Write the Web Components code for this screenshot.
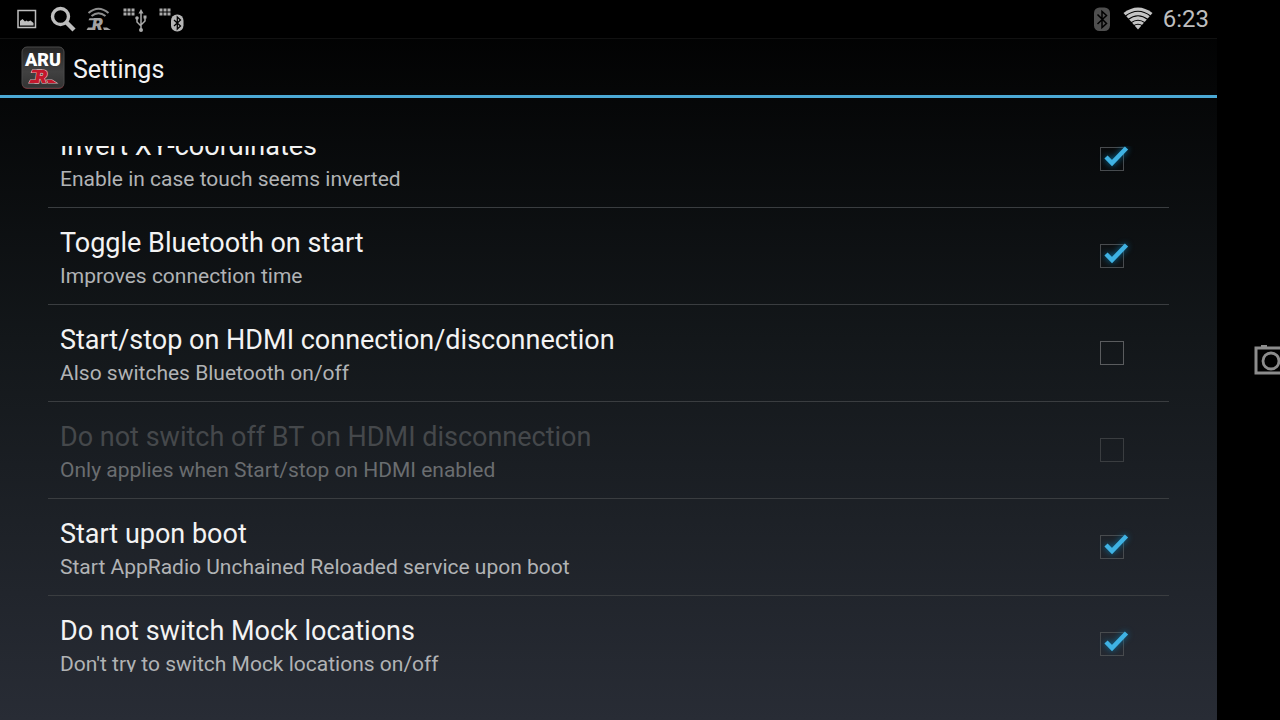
<!DOCTYPE html>
<html lang="en">
<head>
<meta charset="utf-8">
<meta name="viewport" content="width=device-width, initial-scale=1">
<title>Settings</title>
<style>
  html, body { margin: 0; height: 100%; background: #000; }
  body { font-family: Roboto, "Noto Sans", sans-serif; color: #f3f3f3; }
</style>
</head>
<body>
<settings-screen>
  <status-bar slot="status" time="6:23"></status-bar>
  <action-bar slot="header">Settings</action-bar>
  <settings-list offset="35">
    <setting-row label="Invert XY-coordinates" checked>Enable in case touch seems inverted</setting-row>
    <setting-row label="Toggle Bluetooth on start" checked>Improves connection time</setting-row>
    <setting-row label="Start/stop on HDMI connection/disconnection">Also switches Bluetooth on/off</setting-row>
    <setting-row label="Do not switch off BT on HDMI disconnection" disabled>Only applies when Start/stop on HDMI enabled</setting-row>
    <setting-row label="Start upon boot" checked>Start AppRadio Unchained Reloaded service upon boot</setting-row>
    <setting-row label="Do not switch Mock locations" checked>Don't try to switch Mock locations on/off</setting-row>
  </settings-list>
  <side-bar slot="side"></side-bar>
</settings-screen>

<script>
class BaseElement extends HTMLElement {
  constructor() {
    super();
    this.attachShadow({ mode: "open" });
  }
  connectedCallback() {
    this.shadowRoot.innerHTML = this.render();
    this.ready();
  }
  ready() {}
}

customElements.define("settings-screen", class extends BaseElement {
  render() {
    return `
      <style>
        :host { display: flex; height: 100vh; background: #000; }
        .app { flex: 1; min-width: 0; display: flex; flex-direction: column;
               background: linear-gradient(#000, #13171a 47%, #282c35); }
        main { flex: 1; min-height: 0; display: flex; padding: 48px; }
      </style>
      <div class="app">
        <slot name="status"></slot>
        <slot name="header"></slot>
        <main><slot></slot></main>
      </div>
      <slot name="side"></slot>`;
  }
});

customElements.define("status-bar", class extends BaseElement {
  render() {
    return `
      <style>
        :host { display: flex; justify-content: space-between; align-items: center; height: 38px;
                padding: 0 8px 0 16px; background: #000; border-bottom: 1px solid #111;
                color: #bebebe; font-size: 24px; line-height: 40px; }
        .group { display: flex; align-items: center; gap: 12px; }
        .system { gap: 10px; }
        svg { display: block; }
      </style>
      <div class="group">
        <svg width="22" height="38" viewBox="16 0 22 38" role="img" aria-label="Screenshot saved">
          <path d="M18 10.500h17.500v17H18z" fill="none" stroke="#bebebe" stroke-width="1.500"/>
          <path d="M20 25.500v-4.500l2.500-2 2.500 2.500 1.500-1 1.500 1 2.500-1 3 2.500v2.500z" fill="#bebebe"/>
        </svg>
        <svg width="24" height="38" viewBox="50 0 24 38" overflow="visible" role="img" aria-label="Search">
          <circle cx="60.500" cy="16.500" r="8" fill="none" stroke="#bebebe" stroke-width="3.400"/>
          <path d="M66 22l8 8" stroke="#bebebe" stroke-width="4.500"/>
        </svg>
        <svg width="25" height="38" viewBox="86 0 25 38" role="img" aria-label="AppRadio">
          <g fill="none" stroke="#8e8e8e" stroke-width="2">
            <path d="M88.500 13q10-8.500 20 0M91.500 16q7-5.500 14 0"/>
          </g>
          <path d="M89.500 18.300h8v2h-9zM86.500 30l1.500-2.500h7V30zM103 27.500h4l4 2.500h-7z" fill="#a2a2a2"/>
          <text x="92" y="30" font-family="Inter, sans-serif" font-size="16" font-weight="900" font-style="italic" fill="#a2a2a2">R</text>
        </svg>
        <svg width="25" height="38" viewBox="123 0 25 38" role="img" aria-label="USB connected">
          <path d="M123.500 8.500h3v3h-3zm4 0h3v3h-3zm4 0h3v3h-3zm-8 4h3v3h-3zm4 0h3v3h-3zm4 0h3v3h-3z" fill="#aaa"/>
          <g fill="none" stroke="#aaa" stroke-width="1.500">
            <path d="M141 12v18M137 18v4l4 4M145 17v4l-4 4"/>
          </g>
          <path d="M141 9l2.500 4.500h-5zM143.500 15.500h3v3h-3z" fill="#aaa"/>
          <circle cx="137" cy="18" r="1.800" fill="#aaa"/><circle cx="141" cy="30" r="2" fill="#aaa"/>
        </svg>
        <svg width="26" height="38" viewBox="160 0 26 38" overflow="visible" role="img" aria-label="Bluetooth connected">
          <path d="M159.500 8.500h3v3h-3zm4 0h3v3h-3zm4 0h3v3h-3zm-8 4h3v3h-3zm4 0h3v3h-3zm4 0h3v3h-3z" fill="#aaa"/>
          <rect x="171" y="14.500" width="12.500" height="17" rx="6" fill="#b5b5b5"/>
          <path d="M174 20l6.500 6-3.200 3V17l3.200 3-6.500 6" fill="none" stroke="#000" stroke-width="1.300"/>
        </svg>
      </div>
      <div class="group system">
        <svg width="20" height="38" viewBox="1093 0 20 38" role="img" aria-label="Bluetooth">
          <rect x="1094" y="7.500" width="16" height="23.500" rx="5.500" fill="#4f4f4f"/>
          <path d="M1097.500 14.500l9 9-4.500 4V11.500l4.500 4-9 8.500" fill="none" stroke="#000" stroke-width="1.500"/>
        </svg>
        <svg width="30" height="38" viewBox="1123 0 30 38" role="img" aria-label="Wi-Fi">
          <path d="M1123.500 13q14.500-11 29 0L1138 29.500z" fill="#c4c4c4"/>
          <g fill="none" stroke="#000" stroke-width="1.100">
            <path d="M1125.500 16q12.500-9.500 25 0M1128 19.500q10-7.500 20 0M1131 22.800q7-5 14 0M1133.500 25.800q4.500-3 9 0"/>
          </g>
        </svg>
        <time>${this.getAttribute("time")}</time>
      </div>`;
  }
});

customElements.define("action-bar", class extends BaseElement {
  render() {
    return `
      <style>
        :host { display: flex; align-items: center; gap: 8px; height: 54px; padding: 2px 21px 0;
                border-bottom: 3px solid #4ba9d6; }
        svg { display: block; }
        h1 { margin: 0; padding-top: 4px; font-size: 25px; line-height: 32px; font-weight: 400; }
      </style>
      <svg width="44" height="44" viewBox="0 0 44 44" role="img" aria-label="AppRadio Unchained Reloaded">
        <defs><linearGradient id="g" x2="0" y2="1">
          <stop stop-color="#252525"/><stop offset=".6" stop-color="#414141"/><stop offset="1" stop-color="#333"/>
        </linearGradient></defs>
        <rect x="1" y="2" width="42" height="41" rx="5" fill="#8a2028"/>
        <rect x="1" y="1" width="42" height="41" rx="5" fill="url(#g)" stroke="#4a4a4a"/>
        <text x="22" y="20" text-anchor="middle" font-family="Roboto, sans-serif" font-size="18" font-weight="900" fill="#fff">ARU</text>
        <path d="M11.500 24h9v2.500h-10zM8 37l1.500-3h8v3zM26 34h5l4.500 3H27z" fill="none" stroke="#e8b9bd" stroke-width="1.200"/>
        <text x="14" y="37" font-family="Inter, sans-serif" font-size="18" font-weight="900" font-style="italic" fill="#c4182c" stroke="#e8b9bd" stroke-width="1.200" paint-order="stroke">R</text>
        <path d="M11.500 24h9v2.500h-10zM8 37l1.500-3h8v3zM26 34h5l4.500 3H27z" fill="#c4182c"/>
      </svg>
      <h1><slot></slot></h1>`;
  }
});

customElements.define("settings-list", class extends BaseElement {
  render() {
    return `
      <style>
        :host { display: block; flex: 1; min-width: 0; overflow-y: auto; scrollbar-width: none; }
      </style>
      <slot></slot>`;
  }
  ready() {
    requestAnimationFrame(() => { this.scrollTop = Number(this.getAttribute("offset")); });
  }
});

customElements.define("setting-row", class extends BaseElement {
  render() {
    const on = this.hasAttribute("checked");
    const off = this.hasAttribute("disabled");
    return `
      <style>
        :host { display: block; border-bottom: 1px solid #3a3d40; }
        :host(:last-child) { border-bottom-color: transparent; }
        label { display: flex; align-items: center; justify-content: space-between;
                height: 96px; padding: 0 45px 0 12px; }
        .text { display: flex; flex-direction: column; padding-top: 4px; white-space: nowrap; }
        .title { font-size: 27px; line-height: 36px; }
        .summary { font-size: 21px; line-height: 30px; color: #b1b3b5; }
        .box { position: relative; width: 24px; height: 24px; }
        input { appearance: none; display: block; box-sizing: border-box; width: 24px; height: 24px;
                margin: 0; border: 1px solid #5a5c5e; }
        svg { position: absolute; inset: 0; display: none; overflow: visible; pointer-events: none;
              filter: drop-shadow(0 0 3px #0a6f9c); }
        input:checked { border-color: #484b4e; }
        input:checked + svg { display: block; }
        :host([disabled]) .title { color: #45484b; }
        :host([disabled]) .summary { color: #6a6d70; }
        :host([disabled]) input { border-color: #3a3d40; }
      </style>
      <label>
        <span class="text">
          <span class="title">${this.getAttribute("label")}</span>
          <span class="summary"><slot></slot></span>
        </span>
        <span class="box">
          <input type="checkbox" ${on ? "checked" : ""} ${off ? "disabled" : ""}>
          <svg width="24" height="24" viewBox="0 0 24 24" aria-hidden="true">
            <path d="M6 10l6 6L26.500 1" fill="none" stroke="#3fb2e3" stroke-width="4.500"/>
          </svg>
        </span>
      </label>`;
  }
});

customElements.define("side-bar", class extends BaseElement {
  render() {
    return `
      <style>
        :host { display: flex; align-items: center; justify-content: flex-end; width: 63px; background: #000; overflow: hidden; }
        button { display: block; padding: 0; border: 0; background: none; }
        svg { display: block; }
      </style>
      <button type="button" aria-label="Camera">
        <svg width="26" height="32" viewBox="0 0 26 32">
          <path d="M26 4H2v25H26" fill="none" stroke="#8c8c8c" stroke-width="3"/>
          <path d="M7 1h6v2H7z" fill="#8c8c8c"/>
          <circle cx="17" cy="17" r="8" fill="none" stroke="#8c8c8c" stroke-width="2.800"/>
        </svg>
      </button>`;
  }
});
</script>
</body>
</html>
